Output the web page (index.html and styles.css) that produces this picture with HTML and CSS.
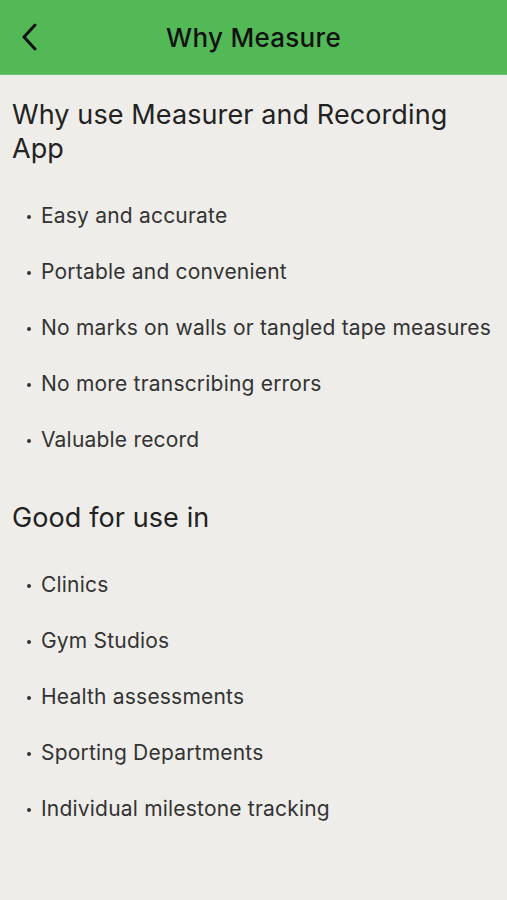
FILE: index.html
```html
<!DOCTYPE html>
<html lang="en">
<head>
    <meta charset="UTF-8">
    <meta name="viewport" content="width=device-width, initial-scale=1.0">
    <title>Why Measure</title>
    <link rel="stylesheet" href="styles.css">
</head>
<body>
    <!-- Top bar with back button -->
    <header class="top-bar">
        <button class="back-btn" aria-label="Back">
            <svg width="16" height="28" viewBox="0 0 16 28">
                <path d="M14 2 L3 14 L14 26" fill="none" stroke="#111" stroke-width="3" stroke-linecap="round" stroke-linejoin="round"/>
            </svg>
        </button>
        <h1 class="title">Why Measure</h1>
    </header>

    <main class="content">
        <section class="block">
            <h2>Why use Measurer and Recording App</h2>
            <ul class="points">
                <li>Easy and accurate</li>
                <li>Portable and convenient</li>
                <li>No marks on walls or tangled tape measures</li>
                <li>No more transcribing errors</li>
                <li>Valuable record</li>
            </ul>
        </section>

        <section class="block">
            <h2>Good for use in</h2>
            <ul class="points">
                <li>Clinics</li>
                <li>Gym Studios</li>
                <li>Health assessments</li>
                <li>Sporting Departments</li>
                <li>Individual milestone tracking</li>
            </ul>
        </section>
    </main>
</body>
</html>
```

FILE: styles.css
```css
body {
    margin: 0;
    font-family: Inter, "Noto Sans", sans-serif;
    background-color: #eeede9; /* Off-white page */
    color: #2b2b2b;
}
.top-bar {
    height: 75px;
    background-color: #53b957; /* App green */
    border-bottom: 1px solid #6cc36f;
    box-sizing: border-box;
    display: flex;
    align-items: center;
    justify-content: center;
    position: relative;
}
.back-btn {
    position: absolute;
    left: 21px;
    top: 23px;
    padding: 0;
    border: none;
    background: none;
    cursor: pointer;
}
.back-btn svg {
    display: block;
}
.title {
    margin: 0;
    font-size: 26px;
    font-weight: 500;
    color: #111;
    letter-spacing: 0.3px;
}
.content {
    padding: 23px 12px 0;
}
.block + .block {
    margin-top: 49px;
}
h2 {
    margin: 0 0 38px;
    font-size: 27px;
    line-height: 34px;
    font-weight: 400;
    color: #222;
    letter-spacing: 0.1px;
}
.points {
    list-style: none;
    margin: 0;
    padding: 0 0 0 29px;
    display: flex;
    flex-direction: column;
    gap: 32px;
}
.points li {
    position: relative;
    font-size: 21px;
    line-height: 24px;
    color: #333;
    letter-spacing: 0.2px;
}
.points li::before {
    content: "";
    position: absolute;
    left: -14px;
    top: 11px;
    width: 4px;
    height: 4px;
    border-radius: 50%;
    background-color: #333;
}
```
